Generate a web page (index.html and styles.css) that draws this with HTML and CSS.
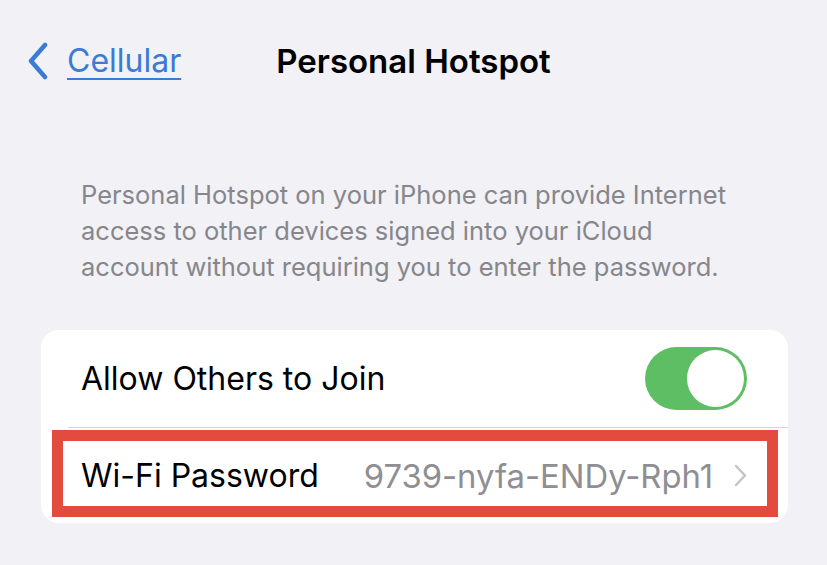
FILE: index.html
```html
<!DOCTYPE html>
<html lang="en">
<head>
  <meta charset="UTF-8">
  <meta name="viewport" content="width=device-width, initial-scale=1.0">
  <title>Personal Hotspot</title>
  <link rel="stylesheet" href="styles.css">
</head>
<body>

  <header class="nav">
    <a class="back" href="#">
      <svg class="back-icon" width="22" height="38" viewBox="0 0 22 38">
        <path d="M18 3 L4 19 L18 35" fill="none" stroke="#3a7bd5" stroke-width="4.5" stroke-linecap="round" stroke-linejoin="round"/>
      </svg>
      <span class="back-label">Cellular</span>
    </a>
    <h1 class="title">Personal Hotspot</h1>
  </header>

  <p class="note">Personal Hotspot on your iPhone can provide Internet access to other devices signed into your iCloud account without requiring you to enter the password.</p>

  <div class="card">
    <div class="row">
      <span class="label">Allow Others to Join</span>
      <span class="toggle"><span class="knob"></span></span>
    </div>
    <div class="divider"></div>
    <div class="row row-pass">
      <span class="label">Wi-Fi Password</span>
      <span class="value">9739-nyfa-ENDy-Rph1</span>
      <svg class="chevron" width="13" height="23" viewBox="0 0 13 23">
        <path d="M2 2 L11 11.5 L2 21" fill="none" stroke="#c4c4c8" stroke-width="2.5" stroke-linecap="round" stroke-linejoin="round"/>
      </svg>
    </div>
  </div>

</body>
</html>
```

FILE: styles.css
```css
body {
  margin: 0;
  padding: 0;
  background-color: #f1f1f6;
  font-family: Inter, "Noto Sans", sans-serif;
  color: #000;
}
.nav {
  position: relative;
  height: 120px;
  display: flex;
  align-items: flex-start;
}
.back {
  display: flex;
  align-items: center;
  gap: 18px;
  margin: 41px 0 0 27px;
  color: #3a7bd5;
  text-decoration: none;
}
.back-label {
  font-size: 32px;
  text-decoration: underline;
  text-underline-offset: 6px;
  text-decoration-thickness: 2px;
}
.title {
  position: absolute;
  left: 0;
  right: 0;
  top: 41px;
  margin: 0;
  text-align: center;
  font-size: 33px;
  font-weight: 600;
  line-height: 40px;
}
.note {
  margin: 57px 80px 0 81px;
  font-size: 25.5px;
  line-height: 36px;
  color: #86868b;
}
.card {
  margin: 45px 39px 0 41px;
  background: #fff;
  border-radius: 18px;
  padding-bottom: 6px;
}
.row {
  display: flex;
  align-items: center;
  height: 97px;
  padding: 0 41px 0 40px;
}
.label {
  font-size: 32px;
  flex: 1;
}
.toggle {
  width: 102px;
  height: 63px;
  border-radius: 32px;
  background: #5dbe63;
  display: flex;
  align-items: center;
  justify-content: flex-end;
  padding-right: 3px;
  box-sizing: border-box;
}
.knob {
  width: 57px;
  height: 57px;
  border-radius: 50%;
  background: #fff;
}
.divider {
  height: 1px;
  background: #d6d6da;
  margin-left: 27px;
}
.row-pass {
  height: 87px;
  box-sizing: border-box;
  margin: 2px 10px 0 11px;
  border: 11px solid #e34b3f;
  padding: 4px 20px 0 18px;
}
.value {
  font-size: 32.8px;
  color: #8e8e93;
  margin-right: 21px;
}
.chevron {
  display: block;
}
```
